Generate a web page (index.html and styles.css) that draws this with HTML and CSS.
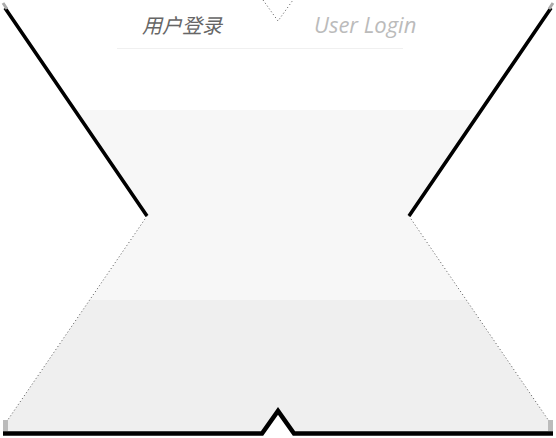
FILE: index.html
```html
<!DOCTYPE html>
<html lang="zh-CN">
<head>
    <meta charset="UTF-8">
    <meta name="viewport" content="width=device-width, initial-scale=1.0">
    <title>用户登录</title>
    <link rel="stylesheet" href="styles.css">
</head>
<body>
    <div class="login-frame">
        <!-- cadre décoratif -->
        <svg class="frame-bg" width="556" height="438" viewBox="0 0 556 438">
            <defs>
                <linearGradient id="bands" x1="0" y1="0" x2="0" y2="438" gradientUnits="userSpaceOnUse">
                    <stop offset="0.251" stop-color="#ffffff"/>
                    <stop offset="0.251" stop-color="#f7f7f7"/>
                    <stop offset="0.685" stop-color="#f7f7f7"/>
                    <stop offset="0.685" stop-color="#efefef"/>
                </linearGradient>
            </defs>
            <polygon points="5,5 147,216 5,424 5,432 263,432 278,410 293,432 551,432 551,424 409,216 551,5" fill="url(#bands)"/>
            <path d="M5,8 L147,216 M551,8 L409,216" stroke="#000" stroke-width="3.6" fill="none"/>
            <path d="M3,3 L7,9 M553,3 L549,9" stroke="#aaa" stroke-width="3" fill="none"/>
            <path d="M147,216 L5,424 M409,216 L551,424 M263,0 L278,21 L293,0" stroke="#555" stroke-width="1" stroke-dasharray="1 2.5" fill="none"/>
            <rect x="3" y="420" width="5" height="11" fill="#bbb"/>
            <rect x="548" y="420" width="5" height="11" fill="#bbb"/>
            <path d="M3,433.5 L262,433.5 L278,411 L294,433.5 L553,433.5" stroke="#000" stroke-width="4.5" fill="none" stroke-linejoin="miter"/>
        </svg>

        <div class="login-head">
            <h1 class="title-cn">用户登录</h1>
            <h2 class="title-en">User Login</h2>
        </div>
        <div class="head-line"></div>
    </div>
</body>
</html>
```

FILE: styles.css
```css
body {
    margin: 0;
    background-color: #fff;
    font-family: "Open Sans", "Noto Sans CJK SC", sans-serif;
}

.login-frame {
    position: relative;
    width: 556px;
    height: 438px;
    overflow: hidden;
}

.frame-bg {
    position: absolute;
    top: 0;
    left: 0;
}

.login-head {
    position: relative;
    display: flex;
    align-items: baseline;
    gap: 92px;
    padding: 11px 0 0 142px;
    height: 37px;
}

.login-head h1,
.login-head h2 {
    margin: 0;
    font-weight: normal;
    font-style: italic;
    line-height: 26px;
    white-space: nowrap;
}

.title-cn {
    font-family: "Noto Sans CJK SC", sans-serif;
    font-size: 20px;
    color: #666;
}

.title-en {
    font-size: 22px;
    color: #bbb;
}

.head-line {
    position: relative;
    width: 286px;
    height: 1px;
    margin-left: 117px;
    background-color: #f0f0f0;
}
```
